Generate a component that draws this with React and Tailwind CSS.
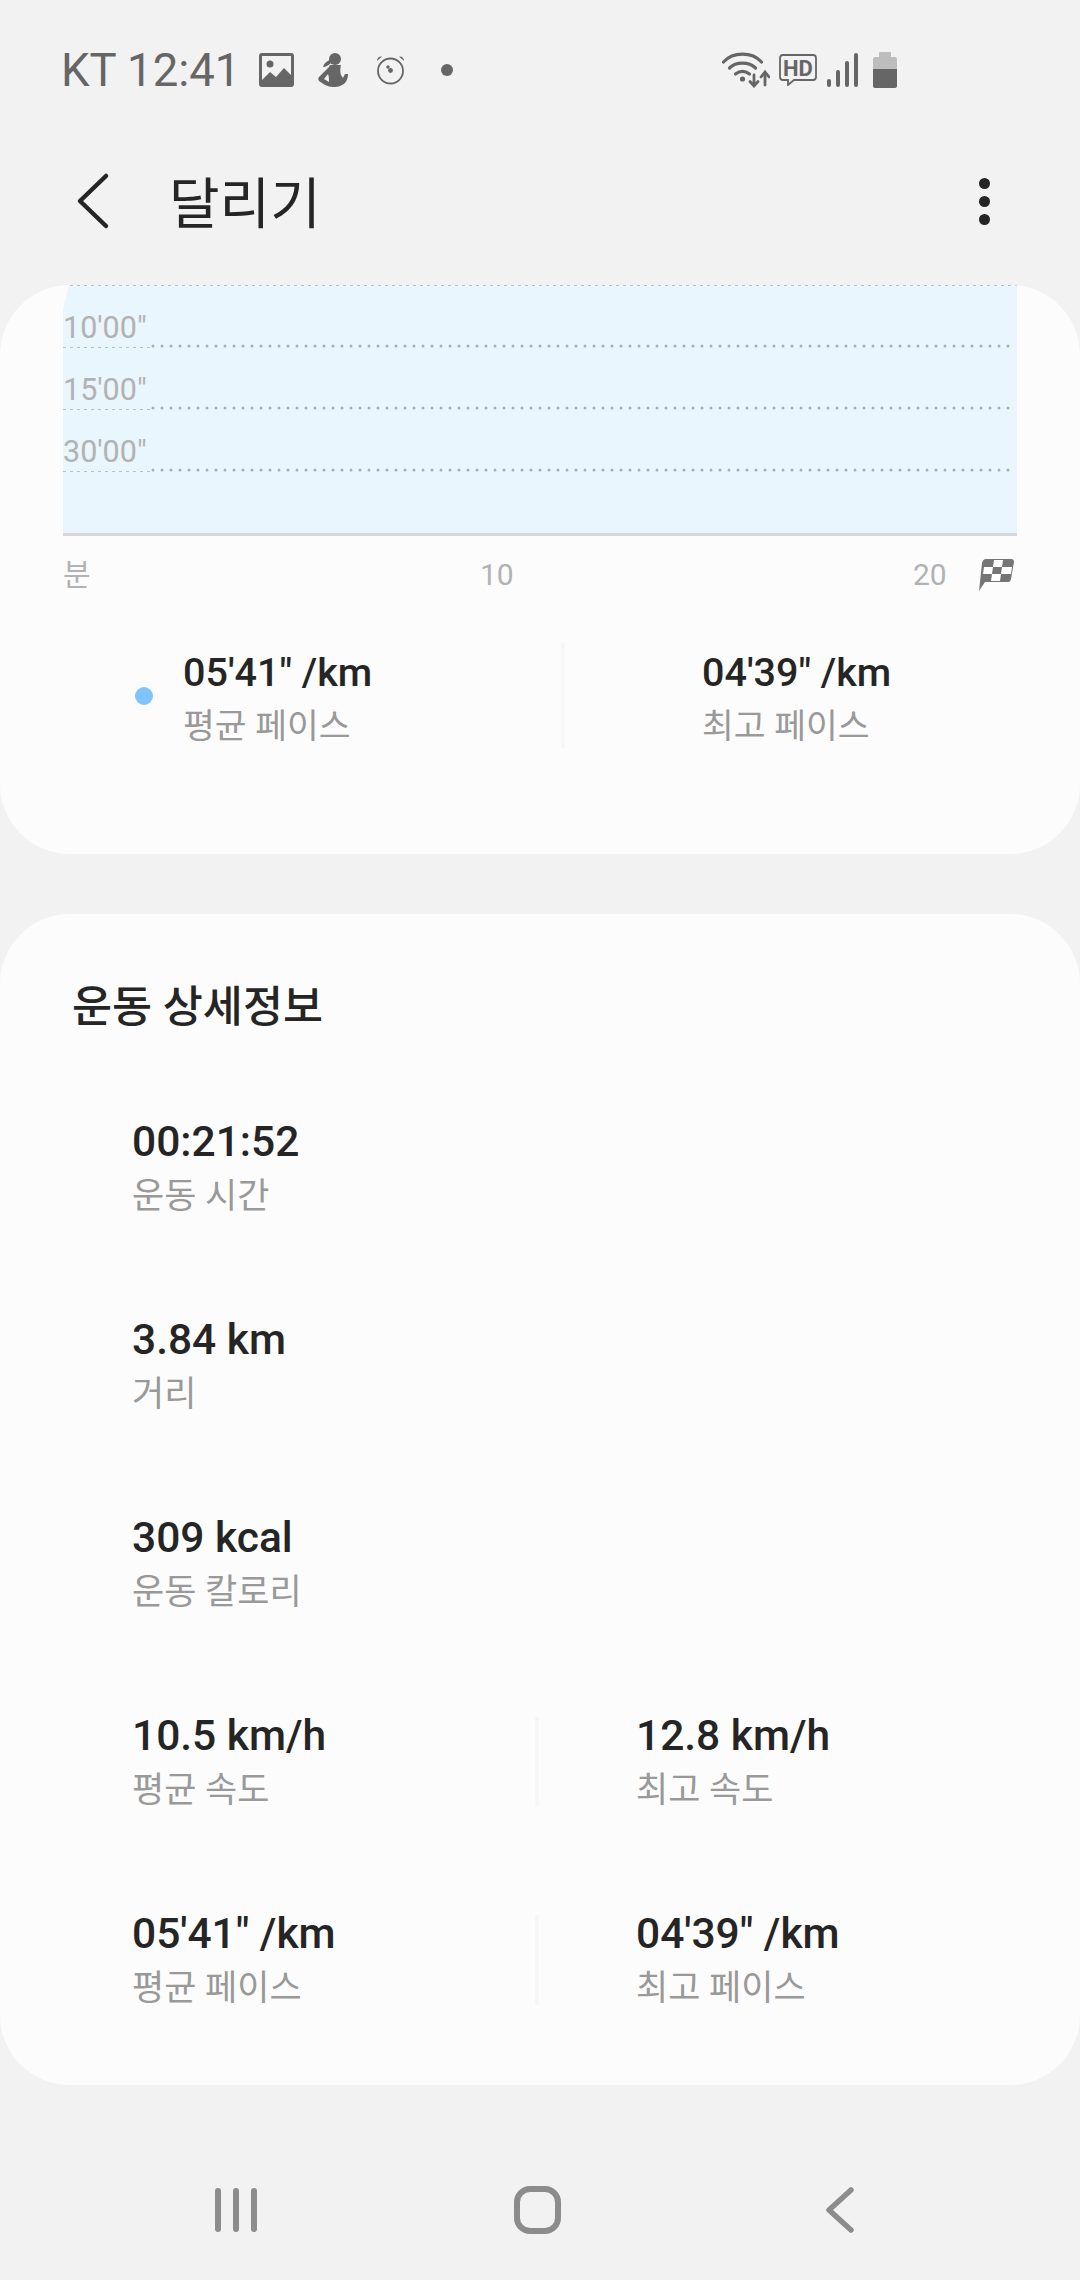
import React from 'react';

const gray = '#666666';

const ImageIcon = () => (
  <svg width="35" height="34" viewBox="0 0 35 34">
    <rect width="35" height="34" rx="3" fill={gray} />
    <rect x="3" y="3" width="29" height="28" fill="#f2f2f2" />
    <circle cx="11" cy="11" r="3.500" fill={gray} />
    <path d="M3 27 L11 19 L17 24 L25 15 L32 22 V31 H3 Z" fill={gray} />
  </svg>
);

const HealthIcon = () => (
  <svg width="30" height="34" viewBox="0 0 30 34">
    <circle cx="17" cy="6" r="6" fill={gray} />
    <path d="M12 7 C9 8 6 10 5 14 C8 14 11 12 13 10 Z" fill={gray} />
    <path
      d="M12 12 H23 C22 16 22 19 23 22 L25 25 L27 21 H30 C30 27 27 31 24 32 C21 34 17 34 15 34 C12 34 10 33 7 32 L1 28 C0 27 0 25 1 24 L11 14 Z M10 21 L6 26 L11 29 C11 26 11 24 10 21 Z"
      fill={gray}
      fillRule="evenodd"
    />
  </svg>
);

const AlarmIcon = () => (
  <svg width="29" height="30" viewBox="0 0 29 30" fill="none">
    <circle cx="14.500" cy="16" r="12.500" stroke={gray} strokeWidth="1.800" />
    <path d="M1 6 C1 3 3 1 6 1.500 Z M28 6 C28 3 26 1 23 1.500 Z" fill={gray} />
    <circle cx="12" cy="12" r="1.700" fill={gray} />
    <circle cx="14.500" cy="15.500" r="2.400" fill={gray} />
  </svg>
);

const WifiIcon = () => (
  <svg width="48" height="36" viewBox="0 0 48 36" fill="none" stroke={gray} strokeLinecap="round">
    <path d="M1.500 10 C11 -0.500 30 -0.500 39.500 10" strokeWidth="3.200" />
    <path d="M7.500 16 C14 9.500 27 9.500 33.500 16" strokeWidth="3.200" />
    <path d="M13.500 22 C18 18.500 23 18.500 27.500 22" strokeWidth="3.200" />
    <circle cx="20.500" cy="27" r="2.600" fill={gray} stroke="none" />
    <path d="M32 23 V33 M28 29.500 L32 34 L36 29.500" strokeWidth="2.800" />
    <path d="M43 33 V21 M39 25 L43 20 L47 25" strokeWidth="2.800" />
  </svg>
);

const HdIcon = () => (
  <svg width="38" height="32" viewBox="0 0 38 32" fill="none">
    <path d="M4 1 H34 Q37 1 37 4 V23 Q37 26 34 26 H15 L9 31 V26 H4 Q1 26 1 23 V4 Q1 1 4 1 Z" stroke={gray} strokeWidth="1.800" />
    <text x="19" y="21.500" textAnchor="middle" fontFamily="Roboto" fontSize="22" fontWeight="700" fill={gray}>HD</text>
  </svg>
);

const SignalIcon = () => (
  <svg width="31" height="34" viewBox="0 0 31 34" fill={gray}>
    <rect x="0" y="26" width="4" height="8" rx="2" />
    <rect x="9" y="17" width="4" height="17" rx="2" />
    <rect x="18" y="8" width="4" height="26" rx="2" />
    <rect x="27" y="0" width="4" height="34" rx="2" />
  </svg>
);

const BatteryIcon = () => (
  <svg width="24" height="36" viewBox="0 0 24 36">
    <rect x="6" y="0" width="12" height="6" rx="1" fill="#bdbdbd" />
    <path d="M0 7 Q0 5 2 5 H22 Q24 5 24 7 V17 H0 Z" fill="#bdbdbd" />
    <path d="M0 17 H24 V34 Q24 36 22 36 H2 Q0 36 0 34 Z" fill={gray} />
  </svg>
);

const FlagIcon = () => (
  <svg width="35" height="32" viewBox="0 0 35 32">
    <path d="M7 0 H32 Q35 0 35 3 L32 20 Q31.500 23 29 23 H6 L0 32 L3 4 Q4 0 7 0 Z" fill="#757575" />
    <path d="M15 1 H24 L23 8 H14 Z M5 8 H14 L13 15 H4 Z M23 8 H33 L32 15 H22 Z M13 15 H22 L21 22 H12 Z" fill="#ffffff" />
  </svg>
);

// thin dashes under the label, then the round dots across the rest
const GridLine = () => (
  <svg className="absolute left-0 -bottom-[1px]" width="954" height="6" viewBox="0 0 954 6">
    <line x1="0" y1="4.500" x2="87" y2="4.500" stroke="#b9bfc3" strokeWidth="1" strokeDasharray="3 4" />
    <line x1="90" y1="3" x2="954" y2="3" stroke="#a9aeb1" strokeWidth="3" strokeDasharray="0 9" strokeLinecap="round" />
  </svg>
);

const PaceRow = ({ label }) => (
  <div className="relative h-[62px] flex items-end pb-[4px]">
    <span className="text-[30.5px] leading-[32px] text-[#b2b2b2]">{label}</span>
    <GridLine />
  </div>
);

const ChartStat = ({ value, label }) => (
  <div className="flex flex-col">
    <span className="text-[39.5px] leading-[52px] font-medium text-[#252525]">{value}</span>
    <span className="text-[34.6px] leading-[54px] text-[#999999]">{label}</span>
  </div>
);

const Stat = ({ value, label }) => (
  <div className="flex flex-col pt-[5px]">
    <span className="text-[42.5px] leading-[52px] font-medium text-[#252525]">{value}</span>
    <span className="text-[35px] leading-[57px] text-[#999999]">{label}</span>
  </div>
);

const DetailRow = ({ left, right }) => (
  <div className="h-[198px] flex items-center pl-[132px]">
    <div className="w-[403px]">
      <Stat value={left[0]} label={left[1]} />
    </div>
    {right && (
      <>
        <div className="w-[4px] h-[90px] bg-[#f7f7f7]" />
        <div className="pl-[97px]">
          <Stat value={right[0]} label={right[1]} />
        </div>
      </>
    )}
  </div>
);

const App = () => {
  return (
    <div className="w-[1080px] h-[2280px] overflow-hidden bg-[#f2f2f2] font-['Roboto','Noto_Sans_CJK_KR',sans-serif]">
      {/* status bar */}
      <div className="h-[140px] flex items-center justify-between pl-[61px] pr-[183px]">
        <div className="flex items-center">
          <span className="text-[45.5px] mt-[1px] leading-none text-[#666666] w-[198px]">KT 12:41</span>
          <ImageIcon />
          <div className="ml-[24px]"><HealthIcon /></div>
          <div className="ml-[28px]"><AlarmIcon /></div>
          <div className="ml-[36px] w-[12px] h-[12px] rounded-full bg-[#666666]" />
        </div>
        <div className="flex items-center">
          <WifiIcon />
          <div className="ml-[9px]"><HdIcon /></div>
          <div className="ml-[10px]"><SignalIcon /></div>
          <div className="ml-[15px]"><BatteryIcon /></div>
        </div>
      </div>

      {/* title bar */}
      <div className="h-[122px] mb-[23px] flex items-center justify-between pl-[76px] pr-[90px]">
        <div className="flex items-center">
          <svg width="34" height="58" viewBox="0 0 34 58" fill="none" stroke="#252525" strokeWidth="4.500" strokeLinecap="round" strokeLinejoin="round">
            <path d="M30 4 L4 29 L30 54" />
          </svg>
          <h1 className="ml-[59px] mt-[6px] text-[55px] leading-none font-normal text-[#252525]">달리기</h1>
        </div>
        <div className="flex flex-col gap-[7px]">
          <div className="w-[11px] h-[11px] rounded-full bg-[#252525]" />
          <div className="w-[11px] h-[11px] rounded-full bg-[#252525]" />
          <div className="w-[11px] h-[11px] rounded-full bg-[#252525]" />
        </div>
      </div>

      {/* pace chart */}
      <div className="h-[569px] rounded-[70px] bg-[#fcfcfc] overflow-hidden">
        <div className="mx-[63px] w-[954px] h-[251px] bg-[#e9f6fd] border-b-[3px] border-[#d5d8da] [clip-path:polygon(6px_0,100%_0,100%_100%,0_100%,0_25px)]">
          <svg className="block" width="954" height="1" viewBox="0 0 954 1">
            <line x1="0" y1="0.500" x2="954" y2="0.500" stroke="#b9bfc3" strokeWidth="1" strokeDasharray="3 4" />
          </svg>
          <PaceRow label={`10'00"`} />
          <PaceRow label={`15'00"`} />
          <PaceRow label={`30'00"`} />
        </div>

        <div className="flex items-center h-[32px] mt-[23px] ml-[63px] text-[30px] leading-none text-[#b2b2b2]">
          <span className="w-[417px]">분</span>
          <span className="w-[433px]">10</span>
          <span className="w-[66px]">20</span>
          <FlagIcon />
        </div>

        <div className="flex h-[105px] mt-[52px]">
          <div className="w-[561px] pl-[135px] pt-[8px] flex items-center">
            <div className="w-[18px] h-[18px] -mt-[8px] rounded-full bg-[#80c4ff] mr-[30px]" />
            <ChartStat value={`05'41" /km`} label="평균 페이스" />
          </div>
          <div className="w-[4px] bg-[#f7f7f7]" />
          <div className="pl-[137px] pt-[8px] flex items-center">
            <ChartStat value={`04'39" /km`} label="최고 페이스" />
          </div>
        </div>
      </div>

      {/* workout details */}
      <div className="mt-[60px] h-[1171px] rounded-[70px] bg-[#fcfcfc] pt-[62px]">
        <h2 className="pl-[72px] h-[64px] mb-[29px] flex items-center text-[43.5px] font-medium text-[#252525]">운동 상세정보</h2>
        <DetailRow left={['00:21:52', '운동 시간']} />
        <DetailRow left={['3.84 km', '거리']} />
        <DetailRow left={['309 kcal', '운동 칼로리']} />
        <DetailRow left={['10.5 km/h', '평균 속도']} right={['12.8 km/h', '최고 속도']} />
        <DetailRow left={[`05'41" /km`, '평균 페이스']} right={[`04'39" /km`, '최고 페이스']} />
      </div>

      {/* navigation bar */}
      <div className="flex items-center pl-[214px] mt-[101px] h-[48px]">
        <svg width="44" height="44" viewBox="0 0 44 44" fill="#8c8c8c">
          <rect x="1" y="0" width="6" height="44" rx="3" />
          <rect x="19" y="0" width="6" height="44" rx="3" />
          <rect x="37" y="0" width="6" height="44" rx="3" />
        </svg>
        <svg className="ml-[256px]" width="47" height="48" viewBox="0 0 47 48" fill="none" stroke="#8c8c8c" strokeWidth="6">
          <rect x="3" y="3" width="41" height="42" rx="13" />
        </svg>
        <svg className="ml-[265px]" width="28" height="46" viewBox="0 0 28 46" fill="none" stroke="#8c8c8c" strokeWidth="5.500" strokeLinecap="round" strokeLinejoin="round">
          <path d="M25 3 L3 23 L25 43" />
        </svg>
      </div>
    </div>
  );
};

export default App;
